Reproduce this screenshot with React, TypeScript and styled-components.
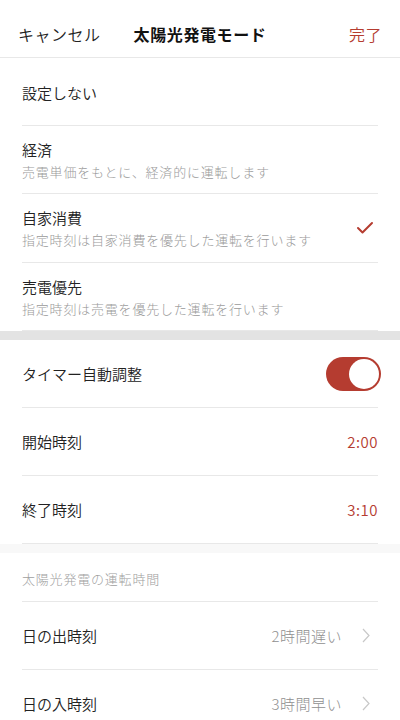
import React from 'react';
import styled, { createGlobalStyle } from 'styled-components';

const red = '#b53c30';

const GlobalStyle = createGlobalStyle`
  html, body {
    margin: 0;
    padding: 0;
    background: #ffffff;
  }
  body {
    font-family: 'Noto Sans CJK JP', 'Noto Sans', sans-serif;
    color: #222222;
    -webkit-font-smoothing: antialiased;
  }
`;

const Screen = styled.div`
  width: 400px;
  height: 720px;
  overflow: hidden;
  background: #ffffff;
`;

const Header = styled.header`
  display: grid;
  grid-template-columns: 1fr auto 1fr;
  align-items: center;
  height: 58px;
  padding: 0 18px;
  box-sizing: border-box;
  border-bottom: 1px solid #e8e8e8;
`;

const HeaderButton = styled.span<{ $accent?: boolean; $right?: boolean }>`
  font-size: 16px;
  font-weight: 350;
  letter-spacing: 0.5px;
  color: ${(props) => (props.$accent ? red : '#222222')};
  justify-self: ${(props) => (props.$right ? 'end' : 'start')};
  margin-top: 11px;
`;

const Title = styled.h1`
  margin: 11px 0 0;
  font-size: 16px;
  font-weight: 700;
  letter-spacing: 0.6px;
  color: #111111;
`;

const List = styled.div`
  padding: 0 22px;
`;

const Row = styled.div<{ $height?: number }>`
  display: flex;
  align-items: center;
  justify-content: space-between;
  height: ${(props) => props.$height ?? 68}px;
  box-sizing: border-box;
  border-bottom: 1px solid #e8e8e8;
`;

const TextBlock = styled.div`
  display: flex;
  flex-direction: column;
  padding-top: 2px;
`;

const Label = styled.span`
  font-size: 15px;
  font-weight: 350;
  line-height: 22px;
  color: #222222;
`;

const SubLabel = styled.span`
  font-size: 13px;
  font-weight: 300;
  line-height: 22px;
  letter-spacing: 0.8px;
  color: #9a9a9a;
`;

const SectionLabel = styled.span`
  font-size: 13px;
  font-weight: 300;
  letter-spacing: 0.8px;
  color: #a0a0a0;
  padding-top: 2px;
`;

const Band = styled.div<{ $light?: boolean }>`
  height: 9px;
  background: ${(props) => (props.$light ? '#f8f8f8' : '#e3e3e3')};
`;

const Value = styled.span<{ $muted?: boolean }>`
  font-size: 15px;
  font-weight: ${(props) => (props.$muted ? 300 : 350)};
  letter-spacing: 0.5px;
  color: ${(props) => (props.$muted ? '#8f8f8f' : red)};
`;

const Trailing = styled.div`
  display: flex;
  align-items: center;
  gap: 20px;
  padding-right: 8px;
`;

const Toggle = styled.div<{ $on: boolean }>`
  width: 55px;
  height: 34px;
  margin-right: -3px;
  border-radius: 17px;
  background: ${(props) => (props.$on ? red : '#e5e5e5')};
  display: flex;
  align-items: center;
  justify-content: ${(props) => (props.$on ? 'flex-end' : 'flex-start')};
  padding: 0 2px;
  box-sizing: border-box;
`;

const Knob = styled.div`
  width: 30px;
  height: 30px;
  border-radius: 50%;
  background: #ffffff;
`;

const Check = () => (
  <svg width="18" height="14" viewBox="0 0 18 14" style={{ marginRight: 4 }}>
    <polyline
      points="2,7 6.5,11.5 16,2"
      fill="none"
      stroke={red}
      strokeWidth="2"
      strokeLinecap="round"
      strokeLinejoin="round"
    />
  </svg>
);

const Chevron = () => (
  <svg width="8" height="15" viewBox="0 0 8 15">
    <polyline
      points="1,1 7,7.5 1,14"
      fill="none"
      stroke="#c8c8c8"
      strokeWidth="1.2"
    />
  </svg>
);

const modes = [
  { title: '設定しない' },
  { title: '経済', sub: '売電単価をもとに、経済的に運転します' },
  { title: '自家消費', sub: '指定時刻は自家消費を優先した運転を行います', selected: true },
  { title: '売電優先', sub: '指定時刻は売電を優先した運転を行います' },
];

const times = [
  { label: '開始時刻', value: '2:00' },
  { label: '終了時刻', value: '3:10' },
];

const solar = [
  { label: '日の出時刻', value: '2時間遅い' },
  { label: '日の入時刻', value: '3時間早い' },
];

export default function App() {
  return (
    <Screen>
      <GlobalStyle />
      <Header>
        <HeaderButton>キャンセル</HeaderButton>
        <Title>太陽光発電モード</Title>
        <HeaderButton $accent $right>
          完了
        </HeaderButton>
      </Header>

      <List>
        {modes.map((mode) => (
          <Row key={mode.title} $height={mode.title === '自家消費' ? 69 : 68}>
            <TextBlock>
              <Label>{mode.title}</Label>
              {mode.sub && <SubLabel>{mode.sub}</SubLabel>}
            </TextBlock>
            {mode.selected && <Check />}
          </Row>
        ))}
      </List>

      <Band />

      <List>
        <Row>
          <Label>タイマー自動調整</Label>
          <Toggle $on>
            <Knob />
          </Toggle>
        </Row>
        {times.map((t) => (
          <Row key={t.label}>
            <Label>{t.label}</Label>
            <Value>{t.value}</Value>
          </Row>
        ))}
      </List>

      <Band $light />

      <List>
        <Row $height={49}>
          <SectionLabel>太陽光発電の運転時間</SectionLabel>
        </Row>
        {solar.map((s) => (
          <Row key={s.label}>
            <Label>{s.label}</Label>
            <Trailing>
              <Value $muted>{s.value}</Value>
              <Chevron />
            </Trailing>
          </Row>
        ))}
      </List>
    </Screen>
  );
}
